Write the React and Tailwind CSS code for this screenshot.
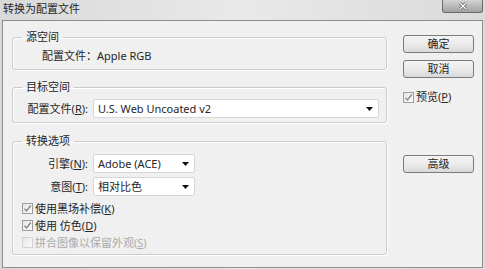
// Convert-to-profile dialog (grayscale Win7 look)

const font = { fontFamily: '"Noto Sans", "Noto Sans CJK SC", sans-serif' };

const Arrow = () => (
  <svg width="7" height="4" viewBox="0 0 7 4" className="shrink-0">
    <path d="M0 0h7L3.5 4z" fill="#111" />
  </svg>
);

const Select = ({ value, className }) => (
  <div
    className={`h-[19px] flex items-center justify-between pl-[4px] pr-[5px] bg-white border border-[#d6d6d6] rounded-[2px] text-[11px] leading-[14px] text-[#262626] ${className}`}
  >
    <span>{value}</span>
    <Arrow />
  </div>
);

const Check = ({ checked, disabled }) => (
  <span
    className={`w-[11px] h-[11px] shrink-0 flex items-center justify-center border bg-gradient-to-br from-[#e6e6e6] to-[#fbfbfb] ${
      disabled ? "border-[#d2d2d2]" : "border-[#9c9c9c]"
    }`}
  >
    {checked && (
      <svg width="9" height="9" viewBox="0 0 9 9">
        <path d="M1.5 4.8l2 2.2L7.8 1.5" stroke="#858585" strokeWidth="1.3" fill="none" />
      </svg>
    )}
  </span>
);

const Button = ({ children, className = "" }) => (
  <button
    className={`w-[71px] h-[18px] flex items-center justify-center rounded-[3px] border border-[#7b7b7b] bg-gradient-to-b from-[#f4f4f4] via-[#ebebeb] to-[#d9d9d9] text-[11px] leading-[14px] text-[#262626] ${className}`}
  >
    {children}
  </button>
);

const Group = ({ title, className, children }) => (
  <fieldset
    className={`w-[375px] border border-[#cbcbcb] rounded-[3px] shadow-[inset_1px_1px_0_#fff,1px_1px_0_#fff] ${className}`}
  >
    <legend className="ml-[9px] px-[4px] text-[11px] leading-[14px] text-[#262626]">{title}</legend>
    {children}
  </fieldset>
);

const Field = ({ label, children, className = "" }) => (
  <div className={`flex items-center pl-[14px] ${className}`}>
    <span className="w-[61px] text-right text-[11px] leading-[14px] text-[#262626]">{label}</span>
    <div className="ml-[5px]">{children}</div>
  </div>
);

const CheckRow = ({ checked, disabled, children }) => (
  <div className="h-[17px] flex items-center gap-[2px] pl-[9px]">
    <Check checked={checked} disabled={disabled} />
    <span className={`text-[11px] leading-[14px] ${disabled ? "text-[#ababab]" : "text-[#262626]"}`}>
      {children}
    </span>
  </div>
);

export default function App() {
  return (
    <div
      className="w-[485px] h-[269px] flex flex-col bg-gradient-to-r from-[#d9d9d9] via-[#e9e9e9] to-[#dadada] overflow-hidden"
      style={font}
    >
      {/* title bar */}
      <div className="h-[20px] flex items-start justify-between">
        <span className="pl-[3px] pt-[2px] text-[11px] leading-[14px] text-[#262626]">转换为配置文件</span>
        <div className="mr-[2px] w-[41px] h-[13px] flex items-center justify-center rounded-b-[3px] border border-t-0 border-[#6a6a6a] bg-gradient-to-b from-[#d4d4d4] to-[#a2a2a2]">
          <svg width="10" height="8" viewBox="0 0 10 8">
            <path d="M2 1l6 6M8 1L2 7" stroke="#555" strokeWidth="2.6" />
            <path d="M2 1l6 6M8 1L2 7" stroke="#fff" strokeWidth="1.3" />
          </svg>
        </div>
      </div>

      {/* body */}
      <div className="mx-[2px] h-[248px] flex border border-[#8e8e8e] bg-[#f0f0f0]">
        <div className="w-[384px] shrink-0 pl-[9px] pt-[9px] flex flex-col">
          <Group title="源空间" className="h-[40px]">
            <div className="pl-[29px] pt-[5px] text-[11px] leading-[14px] text-[#262626]">
              配置文件：Apple RGB
            </div>
          </Group>

          <Group title="目标空间" className="mt-[10px] h-[43px]">
            <Field
              className="pt-[5px]"
              label={
                <>
                  配置文件(<u>R</u>):
                </>
              }
            >
              <Select value="U.S. Web Uncoated v2" className="w-[286px]" />
            </Field>
          </Group>

          <Group title="转换选项" className="mt-[11px] h-[121px]">
            <Field
              className="pt-[6px]"
              label={
                <>
                  引擎(<u>N</u>):
                </>
              }
            >
              <Select value="Adobe (ACE)" className="w-[102px]" />
            </Field>
            <Field
              className="mt-[4px]"
              label={
                <>
                  意图(<u>T</u>):
                </>
              }
            >
              <Select value="相对比色" className="w-[102px]" />
            </Field>
            <div className="mt-[4px] flex flex-col">
              <CheckRow checked>
                使用黑场补偿(<u>K</u>)
              </CheckRow>
              <CheckRow checked>
                使用 仿色(<u>D</u>)
              </CheckRow>
              <CheckRow disabled>
                拼合图像以保留外观(<u>S</u>)
              </CheckRow>
            </div>
          </Group>
        </div>

        <div className="ml-[16px] pt-[14px] flex flex-col">
          <Button>确定</Button>
          <Button className="mt-[7px]">取消</Button>
          <div className="mt-[12px] h-[14px] flex items-center gap-[2px]">
            <Check checked />
            <span className="text-[11px] leading-[14px] text-[#262626]">
              预览(<u>P</u>)
            </span>
          </div>
          <Button className="mt-[51px]">高级</Button>
        </div>
      </div>
    </div>
  );
}
